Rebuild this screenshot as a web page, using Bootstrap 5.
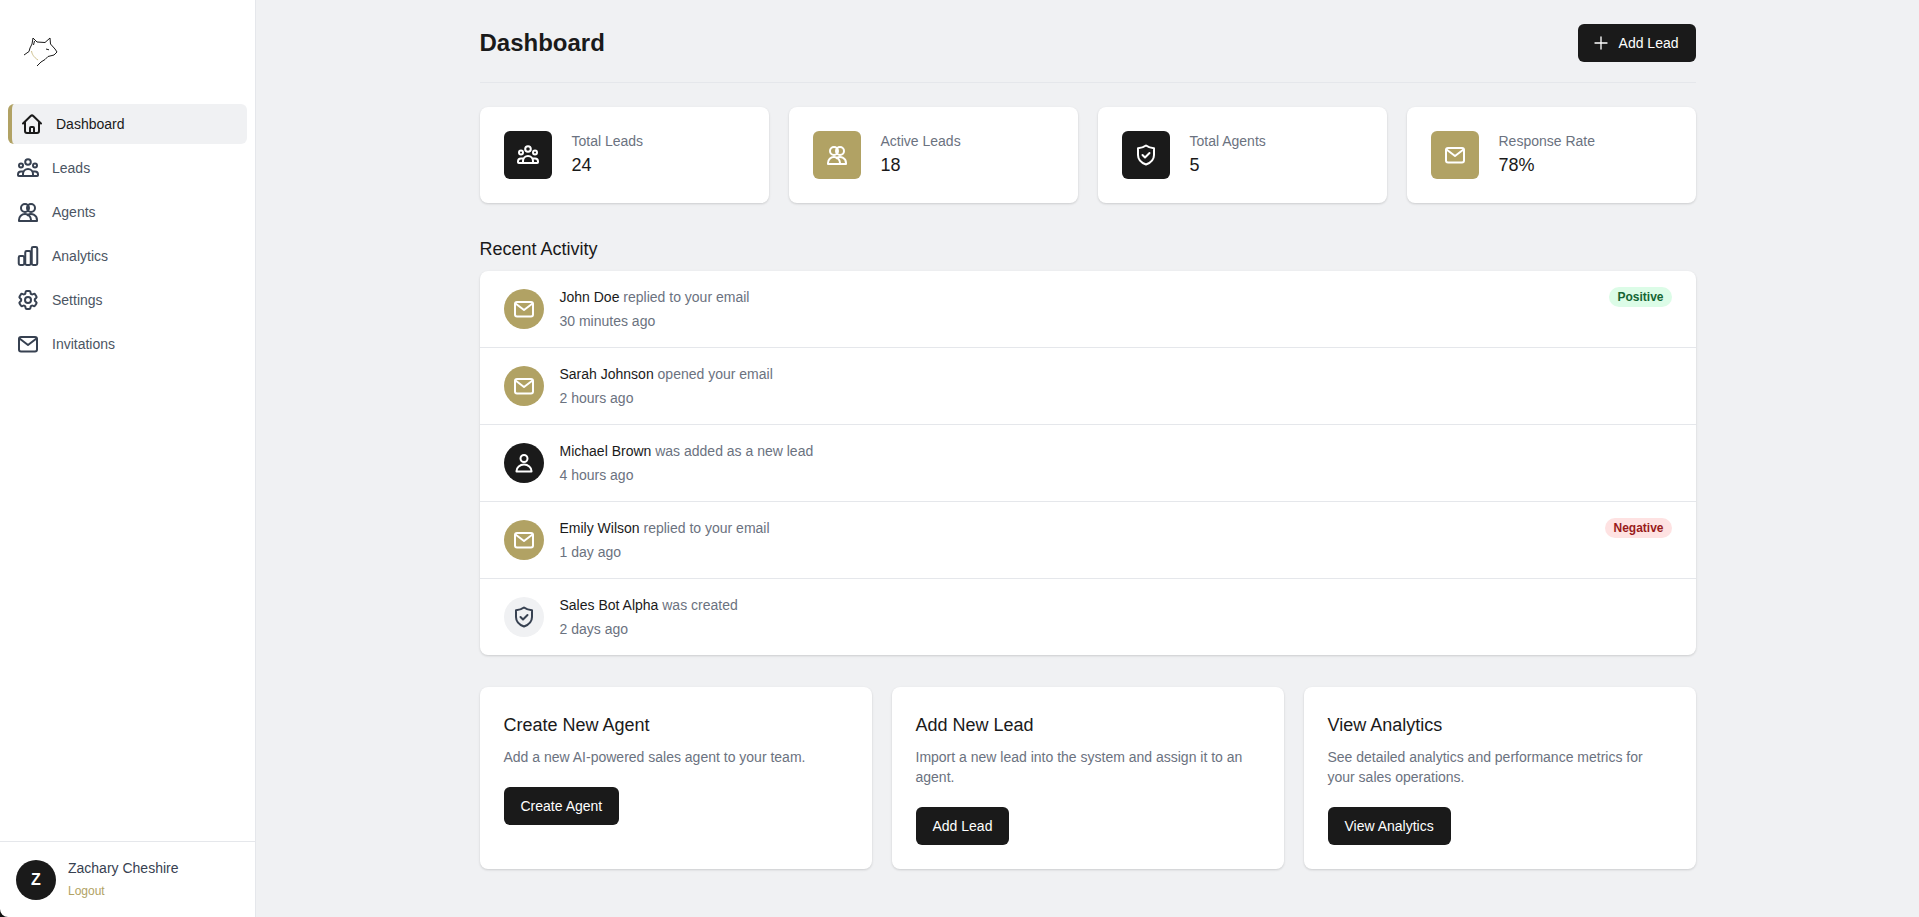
<!DOCTYPE html>
<html lang="en">
<head>
    <meta charset="UTF-8">
    <meta name="viewport" content="width=device-width, initial-scale=1.0">
    <title>Dashboard</title>
    <link href="https://cdn.jsdelivr.net/npm/bootstrap@5.3.0/dist/css/bootstrap.min.css" rel="stylesheet">
    <style>
        body { font-family: "Liberation Sans", Arial, sans-serif; background: #f0f1f3; color: #1a1a1a; font-size: 14px; height: 917px; overflow: hidden; }
        .ico { fill: none; stroke: currentColor; stroke-width: 2; stroke-linecap: round; stroke-linejoin: round; flex-shrink: 0; }
        .app-shell { background: #111; }
        .side-col { width: 256px; height: 917px; background: #fff; border-right: 1px solid #e5e7eb; border-bottom-left-radius: 8px; flex-shrink: 0; }
        .logo-wrap { height: 104px; padding: 35px 0 0 24px; }
        .side-link { height: 40px; padding-left: 8px; margin: 0 8px 4px; border-radius: 6px; color: #4b5563; line-height: 20px; text-decoration: none; gap: 12px; }
        .side-link .ico { color: #374151; }
        .side-link.is-active { background: #f0f1f3; border-left: 4px solid #b1a264; color: #1a1a1a; }
        .side-link.is-active .ico { color: #1a1a1a; }
        .user-box { height: 76px; border-top: 1px solid #e5e7eb; padding: 16px 16px 0; gap: 12px; }
        .avatar { width: 40px; height: 40px; margin-top: 2px; border-radius: 50%; background: #1a1a1a; color: #fff; font-weight: 700; font-size: 16px; }
        .user-name { color: #374151; line-height: 20px; }
        .user-logout { color: #b1a264; font-size: 12px; line-height: 16px; margin-top: 5px; text-decoration: none; display: block; }
        .main-col { background: #f0f1f3; }
        .page-wrap { width: 1280px; margin: 0 auto; padding: 24px 32px; }
        .page-head { height: 59px; border-bottom: 1px solid #e5e7eb; margin-bottom: 24px; }
        .page-title { font-size: 24px; font-weight: 700; line-height: 38px; margin: 0; }
        .btn-ink { background: #1a1a1a; color: #fff; border: 0; border-radius: 6px; font-size: 14px; line-height: 20px; padding: 9px 17px; height: 38px; }
        .btn-ink:hover { background: #1a1a1a; color: #fff; }
        .btn-plus { gap: 10px; }
        .btn-plus .ico { margin-left: -2px; }
        .panel { background: #fff; border-radius: 8px; box-shadow: 0 1px 3px rgba(0,0,0,.1), 0 1px 2px rgba(0,0,0,.06); }
        .stat-grid { display: grid; grid-template-columns: repeat(4, 1fr); gap: 20px; margin-bottom: 32px; }
        .stat-card { height: 96px; padding: 24px; gap: 20px; }
        .stat-ico { width: 48px; height: 48px; border-radius: 6px; color: #fff; }
        .bg-ink { background: #1a1a1a; }
        .bg-gold { background: #b1a264; }
        .stat-label { color: #6b7280; line-height: 20px; }
        .stat-num { font-size: 18px; line-height: 28px; color: #1a1a1a; }
        .sect-title { font-size: 18px; line-height: 28px; font-weight: 400; margin: 0 0 8px; }
        .act-row { height: 77px; padding: 16px 24px; gap: 16px; border-bottom: 1px solid #e5e7eb; }
        .act-row:last-child { border-bottom: 0; height: 76px; }
        .act-ico { width: 40px; height: 40px; border-radius: 50%; color: #fff; }
        .bg-pale { background: #f0f1f3; color: #374151; }
        .act-line { color: #6b7280; line-height: 20px; }
        .act-line b { color: #1a1a1a; font-weight: 400; }
        .act-time { color: #6b7280; line-height: 20px; margin-top: 4px; }
        .tag-pill { height: 20px; padding: 0 8px; border-radius: 10px; font-size: 12px; font-weight: 700; line-height: 20px; }
        .tag-good { background: #dcfce7; color: #166534; }
        .tag-bad { background: #fee2e2; color: #991b1b; }
        .act-grid { display: grid; grid-template-columns: repeat(3, 1fr); gap: 20px; margin-top: 32px; }
        .act-card { padding: 24px; height: 182px; }
        .act-card h3 { font-size: 18px; line-height: 28px; font-weight: 400; margin: 0 0 8px; }
        .act-card p { color: #6b7280; line-height: 20px; margin: 0 0 20px; }
    </style>
</head>
<body>
    <svg width="0" height="0" class="position-absolute">
        <symbol id="i-home" viewBox="0 0 24 24"><path d="M3 11.500 10.700 4a1.900 1.900 0 0 1 2.600 0L21 11.500M5 9.500V19a2 2 0 0 0 2 2h10a2 2 0 0 0 2-2V9.500M10 21v-5a1 1 0 0 1 1-1h2a1 1 0 0 1 1 1v5"/></symbol>
        <symbol id="i-leads" viewBox="0 0 24 24"><circle cx="12" cy="6" r="2.800"/><circle cx="5" cy="9.500" r="2"/><circle cx="19" cy="9.500" r="2"/><path d="M7 20v-2a5 5 0 0 1 10 0v2zM7 20H2.800a.8.8 0 0 1-.8-.8v-.700a3 3 0 0 1 3-3h2.800M17 20h4.200a.8.8 0 0 0 .8-.8v-.700a3 3 0 0 0-3-3h-2.800"/></symbol>
        <symbol id="i-agents" viewBox="0 0 24 24"><circle cx="9" cy="8" r="4"/><circle cx="15" cy="8" r="4"/><path d="M3 21v-1a6 6 0 0 1 12 0v1zM15 21h6v-1a6 6 0 0 0-9.500-4.900"/></symbol>
        <symbol id="i-chart" viewBox="0 0 24 24"><rect x="2.750" y="12" width="5.500" height="9" rx="1.400"/><rect x="9.250" y="7" width="5.500" height="14" rx="1.400"/><rect x="15.750" y="3" width="5.500" height="18" rx="1.400"/></symbol>
        <symbol id="i-gear" viewBox="0 0 24 24"><path d="M9.594 3.940c.09-.542.56-.94 1.110-.94h2.593c.55 0 1.020.398 1.110.94l.213 1.281c.063.374.313.686.645.870.074.04.147.083.22.127.325.196.72.257 1.075.124l1.217-.456a1.125 1.125 0 0 1 1.370.49l1.296 2.247a1.125 1.125 0 0 1-.26 1.431l-1.003.827c-.293.241-.438.613-.43.992a7.723 7.723 0 0 1 0 .255c-.008.378.137.75.43.991l1.004.827c.424.35.534.955.26 1.430l-1.298 2.247a1.125 1.125 0 0 1-1.369.491l-1.217-.456c-.355-.133-.75-.072-1.076.124a6.470 6.470 0 0 1-.22.128c-.331.183-.581.495-.644.869l-.213 1.281c-.09.543-.56.94-1.110.94h-2.594c-.55 0-1.019-.398-1.110-.94l-.213-1.281c-.062-.374-.312-.686-.644-.870a6.520 6.520 0 0 1-.22-.127c-.325-.196-.72-.257-1.076-.124l-1.217.456a1.125 1.125 0 0 1-1.369-.49l-1.297-2.247a1.125 1.125 0 0 1 .26-1.431l1.004-.827c.292-.24.437-.613.43-.991a6.932 6.932 0 0 1 0-.255c.007-.38-.138-.751-.43-.992l-1.004-.827a1.125 1.125 0 0 1-.26-1.430l1.297-2.247a1.125 1.125 0 0 1 1.370-.491l1.216.456c.356.133.751.072 1.076-.124.072-.044.146-.086.22-.128.332-.183.582-.495.644-.869l.214-1.280Z"/><circle cx="12" cy="12" r="3"/></symbol>
        <symbol id="i-mail" viewBox="0 0 24 24"><rect x="3" y="5" width="18" height="14.500" rx="2"/><path d="m3.500 6.500 8.500 6.500 8.500-6.500"/></symbol>
        <symbol id="i-shield" viewBox="0 0 24 24"><path d="M12 2.500c2 1.500 4.500 2.500 8 2.800V12c0 4.500-3.300 7.800-8 9.500-4.700-1.700-8-5-8-9.500V5.300c3.500-.3 6-1.300 8-2.800z"/><path d="m8.500 12 2.500 2.500 4.500-4.500"/></symbol>
        <symbol id="i-person" viewBox="0 0 24 24"><circle cx="12" cy="7.500" r="3.500"/><path d="M4.500 20.500V20a7.500 6.500 0 0 1 15 0v.500z"/></symbol>
        <symbol id="i-plus" viewBox="0 0 24 24"><path d="M12 3v18M3 12h18"/></symbol>
    </svg>

    <div class="app-shell d-flex">
        <aside class="side-col d-flex flex-column">
            <div class="logo-wrap">
                <svg width="34" height="34" viewBox="0 0 34 34" fill="none" stroke="#1a1a1a" stroke-width="1" stroke-linejoin="round">
                    <path d="M0 20 5 16.500 6 13 8 9 9 3 13 7 21 7.500 26 3 26.500 9 31 14 33 17 30 20 24 21.500 21 24.500 17 27 13 31"/>
                    <path d="M10.500 6 9.500 10M22 14l3 .8"/>
                    <path d="M7.500 16c.5 3 2 6 6.500 9" stroke="#cdbf8c"/>
                </svg>
            </div>
            <nav class="d-flex flex-column flex-grow-1">
                <a href="#" class="side-link is-active d-flex align-items-center"><svg class="ico" width="24" height="24"><use href="#i-home"/></svg>Dashboard</a>
                <a href="#" class="side-link d-flex align-items-center"><svg class="ico" width="24" height="24"><use href="#i-leads"/></svg>Leads</a>
                <a href="#" class="side-link d-flex align-items-center"><svg class="ico" width="24" height="24"><use href="#i-agents"/></svg>Agents</a>
                <a href="#" class="side-link d-flex align-items-center"><svg class="ico" width="24" height="24"><use href="#i-chart"/></svg>Analytics</a>
                <a href="#" class="side-link d-flex align-items-center"><svg class="ico" width="24" height="24"><use href="#i-gear"/></svg>Settings</a>
                <a href="#" class="side-link d-flex align-items-center"><svg class="ico" width="24" height="24"><use href="#i-mail"/></svg>Invitations</a>
            </nav>
            <div class="user-box d-flex">
                <div class="avatar d-flex align-items-center justify-content-center">Z</div>
                <div>
                    <div class="user-name">Zachary Cheshire</div>
                    <a href="#" class="user-logout">Logout</a>
                </div>
            </div>
        </aside>

        <main class="main-col flex-grow-1">
            <div class="page-wrap">
                <div class="page-head d-flex justify-content-between align-items-start">
                    <h1 class="page-title">Dashboard</h1>
                    <button class="btn btn-ink btn-plus d-flex align-items-center"><svg class="ico" width="16" height="16"><use href="#i-plus"/></svg>Add Lead</button>
                </div>

                <div class="stat-grid">
                    <div class="panel stat-card d-flex">
                        <div class="stat-ico bg-ink d-flex align-items-center justify-content-center"><svg class="ico" width="24" height="24"><use href="#i-leads"/></svg></div>
                        <div><div class="stat-label">Total Leads</div><div class="stat-num">24</div></div>
                    </div>
                    <div class="panel stat-card d-flex">
                        <div class="stat-ico bg-gold d-flex align-items-center justify-content-center"><svg class="ico" width="24" height="24"><use href="#i-agents"/></svg></div>
                        <div><div class="stat-label">Active Leads</div><div class="stat-num">18</div></div>
                    </div>
                    <div class="panel stat-card d-flex">
                        <div class="stat-ico bg-ink d-flex align-items-center justify-content-center"><svg class="ico" width="24" height="24"><use href="#i-shield"/></svg></div>
                        <div><div class="stat-label">Total Agents</div><div class="stat-num">5</div></div>
                    </div>
                    <div class="panel stat-card d-flex">
                        <div class="stat-ico bg-gold d-flex align-items-center justify-content-center"><svg class="ico" width="24" height="24"><use href="#i-mail"/></svg></div>
                        <div><div class="stat-label">Response Rate</div><div class="stat-num">78%</div></div>
                    </div>
                </div>

                <h2 class="sect-title">Recent Activity</h2>
                <div class="panel">
                    <div class="act-row d-flex align-items-center">
                        <div class="act-ico bg-gold d-flex align-items-center justify-content-center"><svg class="ico" width="24" height="24"><use href="#i-mail"/></svg></div>
                        <div class="flex-grow-1"><div class="act-line"><b>John Doe</b> replied to your email</div><div class="act-time">30 minutes ago</div></div>
                        <span class="tag-pill tag-good align-self-start">Positive</span>
                    </div>
                    <div class="act-row d-flex align-items-center">
                        <div class="act-ico bg-gold d-flex align-items-center justify-content-center"><svg class="ico" width="24" height="24"><use href="#i-mail"/></svg></div>
                        <div class="flex-grow-1"><div class="act-line"><b>Sarah Johnson</b> opened your email</div><div class="act-time">2 hours ago</div></div>
                    </div>
                    <div class="act-row d-flex align-items-center">
                        <div class="act-ico bg-ink d-flex align-items-center justify-content-center"><svg class="ico" width="24" height="24"><use href="#i-person"/></svg></div>
                        <div class="flex-grow-1"><div class="act-line"><b>Michael Brown</b> was added as a new lead</div><div class="act-time">4 hours ago</div></div>
                    </div>
                    <div class="act-row d-flex align-items-center">
                        <div class="act-ico bg-gold d-flex align-items-center justify-content-center"><svg class="ico" width="24" height="24"><use href="#i-mail"/></svg></div>
                        <div class="flex-grow-1"><div class="act-line"><b>Emily Wilson</b> replied to your email</div><div class="act-time">1 day ago</div></div>
                        <span class="tag-pill tag-bad align-self-start">Negative</span>
                    </div>
                    <div class="act-row d-flex align-items-center">
                        <div class="act-ico bg-pale d-flex align-items-center justify-content-center"><svg class="ico" width="24" height="24"><use href="#i-shield"/></svg></div>
                        <div class="flex-grow-1"><div class="act-line"><b>Sales Bot Alpha</b> was created</div><div class="act-time">2 days ago</div></div>
                    </div>
                </div>

                <div class="act-grid">
                    <div class="panel act-card">
                        <h3>Create New Agent</h3>
                        <p>Add a new AI-powered sales agent to your team.</p>
                        <button class="btn btn-ink">Create Agent</button>
                    </div>
                    <div class="panel act-card">
                        <h3>Add New Lead</h3>
                        <p>Import a new lead into the system and assign it to an agent.</p>
                        <button class="btn btn-ink">Add Lead</button>
                    </div>
                    <div class="panel act-card">
                        <h3>View Analytics</h3>
                        <p>See detailed analytics and performance metrics for your sales operations.</p>
                        <button class="btn btn-ink">View Analytics</button>
                    </div>
                </div>
            </div>
        </main>
    </div>
    <script src="https://cdn.jsdelivr.net/npm/bootstrap@5.3.0/dist/js/bootstrap.bundle.min.js"></script>
</body>
</html>
